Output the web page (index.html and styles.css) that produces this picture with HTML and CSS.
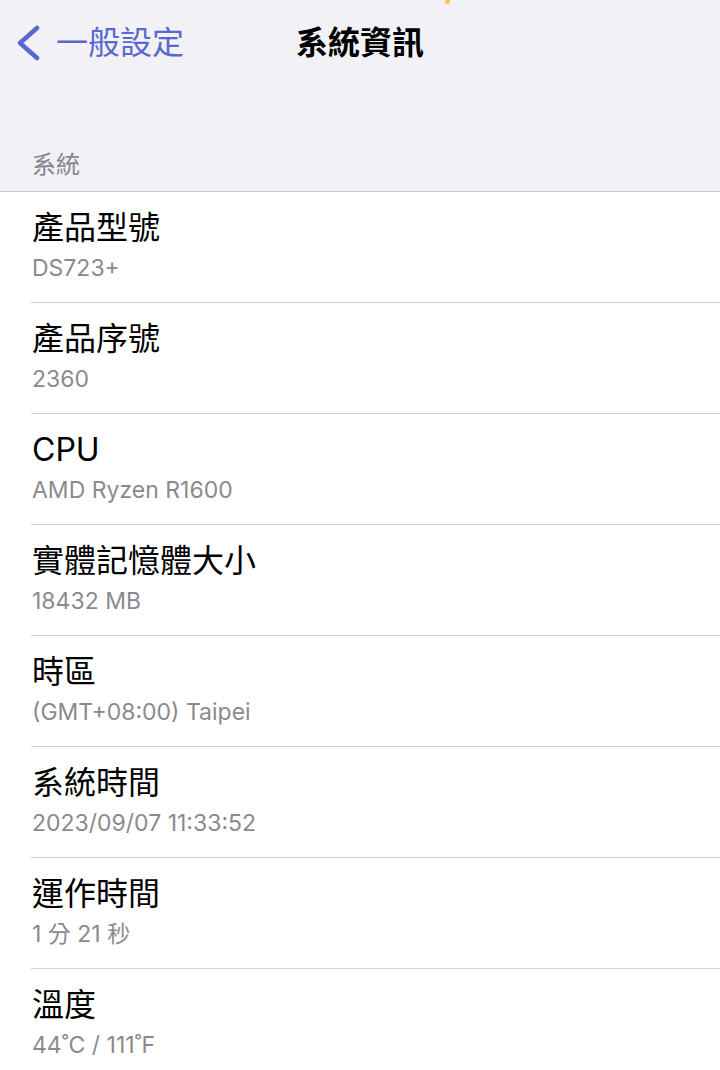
FILE: index.html
```html
<!DOCTYPE html>
<html lang="zh-Hant">
<head>
  <meta charset="UTF-8" />
  <meta name="viewport" content="width=device-width, initial-scale=1.0"/>
  <title>系統資訊</title>
  <link rel="stylesheet" href="styles.css">
</head>
<body>
  <div class="status-dot"></div>

  <header class="navbar">
    <a class="back" href="#">
      <svg class="chevron" viewBox="0 0 24 36" width="24" height="36">
        <path d="M21 3 L4 18 L21 33" />
      </svg>
      <span>一般設定</span>
    </a>
    <h1 class="title">系統資訊</h1>
    <div></div>
  </header>

  <div class="section-label">系統</div>

  <ul class="list">
    <li class="row">
      <div class="row-title">產品型號</div>
      <div class="row-value">DS723+</div>
    </li>
    <li class="row">
      <div class="row-title">產品序號</div>
      <div class="row-value">2360</div>
    </li>
    <li class="row">
      <div class="row-title">CPU</div>
      <div class="row-value">AMD Ryzen R1600</div>
    </li>
    <li class="row">
      <div class="row-title">實體記憶體大小</div>
      <div class="row-value">18432 MB</div>
    </li>
    <li class="row">
      <div class="row-title">時區</div>
      <div class="row-value">(GMT+08:00) Taipei</div>
    </li>
    <li class="row">
      <div class="row-title">系統時間</div>
      <div class="row-value">2023/09/07 11:33:52</div>
    </li>
    <li class="row">
      <div class="row-title">運作時間</div>
      <div class="row-value">1 分 21 秒</div>
    </li>
    <li class="row">
      <div class="row-title">溫度</div>
      <div class="row-value">44˚C / 111˚F</div>
    </li>
  </ul>
</body>
</html>
```

FILE: styles.css
```css
body {
  margin: 0;
  font-family: Inter, "Noto Sans CJK TC", sans-serif;
  background-color: #f2f1f6;
  color: #000;
}

.status-dot {
  position: absolute;
  top: -4px;
  left: 445px;
  width: 5px;
  height: 8px;
  border-radius: 3px;
  background-color: #f4c64a;
  filter: blur(0.6px);
}

.navbar {
  height: 86px;
  display: grid;
  grid-template-columns: 1fr auto 1fr;
  align-items: center;
}

.back {
  display: flex;
  align-items: center;
  gap: 16px;
  padding-left: 16px;
  color: #5868cf;
  text-decoration: none;
  font-size: 32px;
  line-height: 38px;
}

.chevron path {
  fill: none;
  stroke: #5868cf;
  stroke-width: 4.5;
  stroke-linecap: round;
  stroke-linejoin: round;
}

.title {
  margin: 0;
  font-size: 32px;
  line-height: 38px;
  font-weight: 700;
}

.section-label {
  padding: 64px 0 11px 32px;
  font-size: 24px;
  line-height: 30px;
  color: #86868b;
}

.list {
  list-style: none;
  margin: 0;
  padding: 0 0 0 31px;
  background-color: #fff;
  border-top: 1px solid #c9c8cd;
}

.row {
  padding: 17px 0 20px 1px;
  border-bottom: 1px solid #cfced3;
}

.row-title {
  font-size: 32px;
  line-height: 38px;
}

.row-value {
  margin-top: 7px;
  font-size: 23px;
  line-height: 28px;
  color: #8a8a8e;
}
```
